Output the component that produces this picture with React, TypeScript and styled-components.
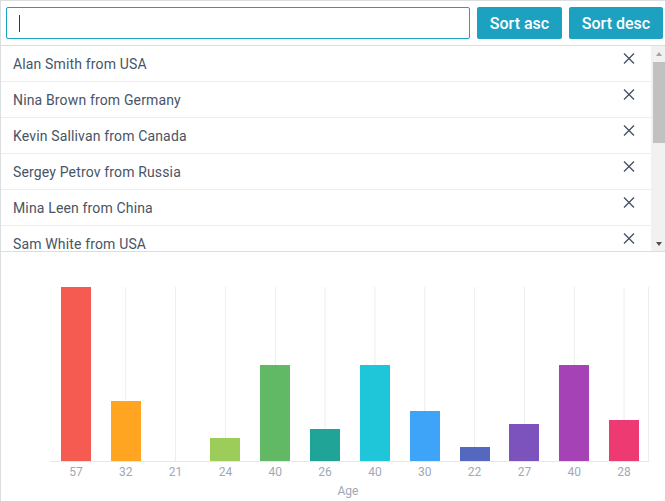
import React from "react";
import styled, { createGlobalStyle } from "styled-components";

const Global = createGlobalStyle`
  html, body { margin: 0; padding: 0; background: #ffffff; }
  body { font-family: Roboto, "Liberation Sans", sans-serif; }
  * { box-sizing: border-box; }
`;

type Person = { name: string; country: string; age: number; color: string };

const people: Person[] = [
  { name: "Alan Smith", country: "USA", age: 57, color: "#f55b50" },
  { name: "Nina Brown", country: "Germany", age: 32, color: "#ffa521" },
  { name: "Kevin Sallivan", country: "Canada", age: 21, color: "#9ccc5a" },
  { name: "Sergey Petrov", country: "Russia", age: 24, color: "#9ccc5a" },
  { name: "Mina Leen", country: "China", age: 40, color: "#61b865" },
  { name: "Sam White", country: "USA", age: 26, color: "#20a497" },
  { name: "Anna Fox", country: "UK", age: 40, color: "#1fc5d9" },
  { name: "Tom Clark", country: "Ireland", age: 30, color: "#3ea4f7" },
  { name: "Lee Wong", country: "Japan", age: 22, color: "#5468c0" },
  { name: "Maria Lopez", country: "Spain", age: 27, color: "#7c52bd" },
  { name: "Paul Meyer", country: "Austria", age: 40, color: "#a543b6" },
  { name: "Eva Novak", country: "Czechia", age: 28, color: "#ee3a73" },
];

const Frame = styled.div`
  width: 665px;
  height: 501px;
  display: flex;
  flex-direction: column;
  border-top: 1px solid #dadee0;
  border-left: 1px solid #dadee0;
  overflow: hidden;
`;

const Toolbar = styled.div`
  display: flex;
  align-items: center;
  gap: 7px;
  height: 45px;
  padding: 0 2px 0 5px;
  border-bottom: 1px solid #dadee0;
  flex-shrink: 0;
`;

const InputWrap = styled.div`
  position: relative;
  flex: 1;
  height: 32px;
`;

const SearchInput = styled.input`
  width: 100%;
  height: 100%;
  border: 1px solid #1ca1c1;
  border-radius: 2px;
  outline: none;
  padding: 0 12px;
  font: 14px Roboto, "Liberation Sans", sans-serif;
  color: #475466;
  caret-color: transparent;
`;

const Caret = styled.span`
  position: absolute;
  left: 13px;
  top: 8px;
  width: 1px;
  height: 17px;
  background: #333a45;
`;

const SortButton = styled.button<{ $w: number }>`
  width: ${(p) => p.$w}px;
  height: 32px;
  border: none;
  border-radius: 2px;
  background: #1ca1c1;
  color: #ffffff;
  font: 500 16px Roboto, "Liberation Sans", sans-serif;
  padding: 0;
  flex-shrink: 0;
`;

const ListBox = styled.div`
  height: 206px;
  flex-shrink: 0;
  display: flex;
  border-bottom: 1px solid #dadee0;
`;

const ListBody = styled.div`
  flex: 1;
  overflow: hidden;
`;

const ScrollTrack = styled.div`
  width: 14px;
  flex-shrink: 0;
  background: #f1f1f1;
  display: flex;
  flex-direction: column;
`;

const ScrollArrow = styled.div<{ $down?: boolean }>`
  height: 15px;
  flex-shrink: 0;
  display: flex;
  align-items: center;
  justify-content: center;
  padding-left: 2px;
  &::after {
    content: "";
    width: 0;
    height: 0;
    border-left: 3.5px solid transparent;
    border-right: 3.5px solid transparent;
    ${(p) =>
      p.$down
        ? "border-top: 4px solid #505050;"
        : "border-bottom: 4px solid #a3a3a3;"}
  }
`;

const ScrollThumb = styled.div`
  height: 81px;
  margin: 1px 0 0 2px;
  background: #c1c1c1;
  flex-shrink: 0;
`;

const ScrollRest = styled.div`
  flex: 1;
`;

const Row = styled.div`
  height: 36px;
  display: flex;
  align-items: center;
  justify-content: space-between;
  padding: 0 16px 0 12px;
  border-bottom: 1px solid #ebedf0;
  font-size: 14px;
  color: #475466;
  letter-spacing: 0.15px;
  white-space: nowrap;
`;

const CloseBox = styled.span`
  align-self: flex-start;
  margin-top: 7px;
  display: flex;
`;

const CloseIcon = () => (
  <CloseBox>
    <svg width="12" height="11" viewBox="0 0 12 11">
      <path d="M1 0.5 L11 10.5 M11 0.5 L1 10.5" stroke="#475466" strokeWidth="1.4" fill="none" />
    </svg>
  </CloseBox>
);

const ChartArea = styled.div`
  flex: 1;
  position: relative;
`;

const ChartSvg = styled.svg`
  display: block;
`;

const OX = 1;
const OY = 252;
const AXIS_Y = 461;
const TOP_Y = 287;
const LEFT_X = 50;
const RIGHT_X = 648;
const STEP = (RIGHT_X - LEFT_X) / 12;
const ORIGIN = 19;
const MAXV = 57;

const Chart = () => {
  const plotH = AXIS_Y - TOP_Y;
  return (
    <ChartSvg width={664} height={249}>
      <g transform={`translate(${-OX}, ${-OY})`}>
        {people.map((p, i) => {
          const cx = LEFT_X + STEP * (i + 0.5) + 1;
          return i > 0 ? (
            <line key={"g" + i} x1={cx} x2={cx} y1={TOP_Y} y2={AXIS_Y} stroke="#ebedf0" strokeWidth="1" />
          ) : null;
        })}
        <line x1={RIGHT_X + 0.5} x2={RIGHT_X + 0.5} y1={TOP_Y} y2={AXIS_Y} stroke="#ebedf0" strokeWidth="1" />
        {people.map((p, i) => {
          const cx = LEFT_X + STEP * (i + 0.5) + 1;
          const h = p.age <= 21 ? 0 : Math.round(((p.age - ORIGIN) / (MAXV - ORIGIN)) * plotH);
          return (
            <rect key={"b" + i} x={Math.round(cx - 15)} y={AXIS_Y - h} width={30} height={h} fill={p.color} />
          );
        })}
        <line x1={LEFT_X} x2={RIGHT_X + 1} y1={AXIS_Y + 0.5} y2={AXIS_Y + 0.5} stroke="#e4e7eb" strokeWidth="1" />
        {people.map((p, i) => {
          const cx = LEFT_X + STEP * (i + 0.5) + 1;
          return (
            <text
              key={"t" + i}
              x={cx}
              y={476}
              textAnchor="middle"
              fontFamily="Roboto, 'Liberation Sans', sans-serif"
              fontSize="12"
              fill="#9fa8b8"
            >
              {p.age}
            </text>
          );
        })}
        <text
          x={348}
          y={495}
          textAnchor="middle"
          fontFamily="Roboto, 'Liberation Sans', sans-serif"
          fontSize="12"
          fill="#9fa8b8"
        >
          Age
        </text>
      </g>
    </ChartSvg>
  );
};

export default function App() {
  return (
    <>
      <Global />
      <Frame>
        <Toolbar>
          <InputWrap>
            <SearchInput type="text" />
            <Caret />
          </InputWrap>
          <SortButton $w={85}>Sort asc</SortButton>
          <SortButton $w={94}>Sort desc</SortButton>
        </Toolbar>
        <ListBox>
          <ListBody>
            {people.map((p) => (
              <Row key={p.name}>
                <span>
                  {p.name} from {p.country}
                </span>
                <CloseIcon />
              </Row>
            ))}
          </ListBody>
          <ScrollTrack>
            <ScrollArrow />
            <ScrollThumb />
            <ScrollRest />
            <ScrollArrow $down />
          </ScrollTrack>
        </ListBox>
        <ChartArea>
          <Chart />
        </ChartArea>
      </Frame>
    </>
  );
}
